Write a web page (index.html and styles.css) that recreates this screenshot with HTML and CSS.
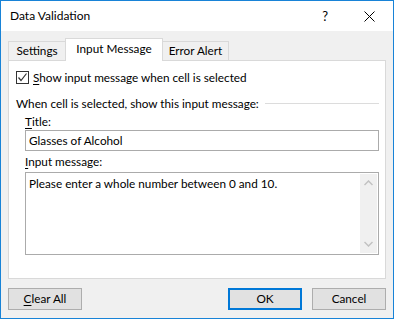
FILE: index.html
```html
<!DOCTYPE html>
<html>
<head>
<meta charset="utf-8">
<link rel="stylesheet" href="styles.css">
</head>
<body>
<div class="window">
  <div class="titlebar">
    <span class="title">Data Validation</span>
    <span class="help">?</span>
    <svg class="close" width="11" height="11" viewBox="0 0 11 11"><path d="M0.5 0.5L10.5 10.5M10.5 0.5L0.5 10.5" stroke="#000" stroke-width="1" fill="none"/></svg>
  </div>
  <div class="client">
    <div class="tabs">
      <div class="tab tab-first">Settings</div>
      <div class="tab tab-active">Input Message</div>
      <div class="tab tab-last">Error Alert</div>
    </div>
    <div class="panel">
      <div class="check-row">
        <span class="checkbox"><svg width="11" height="11" viewBox="0 0 11 11"><path d="M1.5 5.5L4 8.5L9.5 1.5" stroke="#333" stroke-width="1.2" fill="none"/></svg></span>
        <span class="check-label"><u>S</u>how input message when cell is selected</span>
      </div>
      <div class="group-row">
        <span>When cell is selected, show this input message:</span>
        <span class="group-line"></span>
      </div>
      <div class="field-label"><u>T</u>itle:</div>
      <div class="textbox">Glasses of Alcohol</div>
      <div class="field-label field-label-2"><u>I</u>nput message:</div>
      <div class="textarea">
        <div class="textarea-text">Please enter a whole number between 0 and 10.</div>
        <div class="scrollbar">
          <svg width="9" height="6" viewBox="0 0 9 6"><path d="M0.5 5L4.5 1L8.5 5" stroke="#c2c2c2" stroke-width="1.5" fill="none"/></svg>
          <svg width="9" height="6" viewBox="0 0 9 6"><path d="M0.5 1L4.5 5L8.5 1" stroke="#c2c2c2" stroke-width="1.5" fill="none"/></svg>
        </div>
      </div>
    </div>
    <div class="buttons">
      <div class="btn"><u>C</u>lear All</div>
      <div class="spacer"></div>
      <div class="btn btn-default">OK</div>
      <div class="btn">Cancel</div>
    </div>
  </div>
</div>
</body>
</html>
```
FILE: styles.css
```css
html, body {
  margin: 0;
  padding: 0;
}
body {
  width: 394px;
  height: 319px;
  font-family: Lato, "Noto Sans", "Liberation Sans", sans-serif;
  font-size: 11.75px;
  color: #000;
}
u {
  text-decoration: underline;
  text-underline-offset: 2px;
}
.window {
  box-sizing: border-box;
  width: 394px;
  height: 319px;
  border: 1px solid #1883d7;
  display: flex;
  flex-direction: column;
  background: #f0f0f0;
}
.titlebar {
  height: 30px;
  background: #fff;
  display: flex;
  align-items: center;
  padding-left: 9px;
}
.title {
  flex: 1;
  font-size: 12px;
  line-height: 16px;
}
.help {
  font-size: 13px;
  margin-right: 36px;
}
.close {
  margin-right: 18px;
}
.client {
  flex: 1;
  padding: 7px 7px 0 7px;
  display: flex;
  flex-direction: column;
}
.tabs {
  height: 22px;
  display: flex;
  align-items: flex-end;
  padding-left: 0;
}
.tab {
  box-sizing: border-box;
  height: 19px;
  border-top: 1px solid #d9d9d9;
  display: flex;
  align-items: center;
  justify-content: center;
  background: #f0f0f0;
  line-height: 16px;
}
.tab-first {
  width: 57px;
  border-left: 1px solid #d9d9d9;
}
.tab-active {
  width: 98px;
  height: 23px;
  margin-bottom: -1px;
  background: #fff;
  border: 1px solid #d9d9d9;
  border-bottom: none;
  position: relative;
  z-index: 1;
  padding-bottom: 3px;
}
.tab-last {
  width: 66px;
  border-right: 1px solid #d9d9d9;
}
.panel {
  box-sizing: border-box;
  height: 219px;
  background: #fff;
  border: 1px solid #d9d9d9;
  padding: 8px 6px 0 7px;
  display: flex;
  flex-direction: column;
}
.check-row {
  height: 17px;
  display: flex;
  align-items: center;
  gap: 4px;
}
.checkbox {
  box-sizing: border-box;
  width: 13px;
  height: 13px;
  border: 1px solid #333;
  display: flex;
  align-items: center;
  justify-content: center;
}
.group-row {
  margin-top: 9px;
  height: 17px;
  display: flex;
  align-items: center;
}
.group-line {
  flex: 1;
  height: 0;
  border-top: 1px solid #dcdcdc;
  margin-left: 6px;
  margin-top: -1px;
}
.field-label {
  margin-top: 2px;
  margin-left: 9px;
  height: 16px;
  line-height: 16px;
}
.field-label-2 {
  margin-top: 0;
  height: 21px;
  line-height: 21px;
}
.textbox {
  box-sizing: border-box;
  margin-left: 9px;
  height: 21px;
  border: 1px solid #ababab;
  padding-left: 3px;
  line-height: 19px;
}
.textarea {
  box-sizing: border-box;
  margin-left: 9px;
  height: 83px;
  border: 1px solid #ababab;
  padding: 1px;
  display: flex;
}
.textarea-text {
  flex: 1;
  padding: 2px 0 0 2px;
  line-height: 16px;
}
.scrollbar {
  width: 17px;
  background: #f0f0f0;
  display: flex;
  flex-direction: column;
  align-items: center;
  justify-content: space-between;
  padding: 6px 0 6px;
}
.buttons {
  margin-top: 9px;
  display: flex;
}
.spacer {
  flex: 1;
}
.btn {
  box-sizing: border-box;
  width: 74px;
  height: 22px;
  background: #e1e1e1;
  border: 1px solid #adadad;
  display: flex;
  align-items: center;
  justify-content: center;
  line-height: 16px;
}
.btn-default {
  border: 2px solid #0078d7;
  margin-right: 10px;
}
```
